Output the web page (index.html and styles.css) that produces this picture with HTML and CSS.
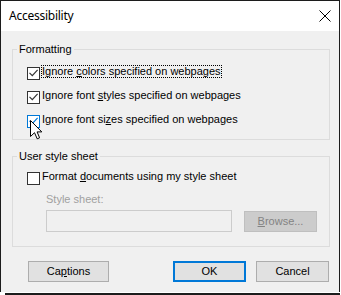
FILE: index.html
```html
<!DOCTYPE html>
<html>
<head>
<meta charset="utf-8">
<link rel="stylesheet" href="styles.css">
</head>
<body>
<div class="window">
  <div class="titlebar">
    <span class="title">Accessibility</span>
    <svg class="close" width="12" height="12" viewBox="0 0 12 12"><path d="M0.5 0.5 L11.5 11.5 M11.5 0.5 L0.5 11.5" stroke="#000" stroke-width="1" fill="none"/></svg>
  </div>
  <div class="content">
    <div class="group g1">
      <div class="group-title">Formatting</div>
      <div class="row">
        <span class="cb"><svg width="11" height="11" viewBox="0 0 11 11"><path d="M1.5 4.8 L4.3 7.6 L9.6 1.8" stroke="#333" stroke-width="1.2" fill="none"/></svg></span>
        <span class="label focus">Ignore <u>c</u>olors specified on webpages</span>
      </div>
      <div class="row">
        <span class="cb"><svg width="11" height="11" viewBox="0 0 11 11"><path d="M1.5 4.8 L4.3 7.6 L9.6 1.8" stroke="#333" stroke-width="1.2" fill="none"/></svg></span>
        <span class="label">Ignore font <u>s</u>tyles specified on webpages</span>
      </div>
      <div class="row">
        <span class="cb hover"><svg width="11" height="11" viewBox="0 0 11 11"><path d="M1.5 4.8 L4.3 7.6 L9.6 1.8" stroke="#0078d7" stroke-width="1.2" fill="none"/></svg></span>
        <span class="label">Ignore font si<u>z</u>es specified on webpages</span>
      </div>
    </div>
    <div class="group g2">
      <div class="group-title">User style sheet</div>
      <div class="row">
        <span class="cb"></span>
        <span class="label">Format <u>d</u>ocuments using my style sheet</span>
      </div>
      <div class="field-label">Style sheet:</div>
      <div class="field-row">
        <div class="input"></div>
        <div class="btn disabled"><u>B</u>rowse...</div>
      </div>
    </div>
    <div class="buttons">
      <div class="btn captions">Ca<u>p</u>tions</div>
      <div class="btn ok">OK</div>
      <div class="btn cancel">Cancel</div>
    </div>
  </div>
</div>
<div class="shadow"></div>
<svg class="cursor" width="13" height="20" viewBox="0 0 13 20"><path d="M0.5 0.5 L0.5 16.5 L4.5 12.7 L7.2 18.8 L9.6 17.8 L7.1 11.9 L11.8 11.9 Z" fill="#fff" stroke="#000" stroke-width="1" stroke-linejoin="miter"/></svg>
</body>
</html>
```
FILE: styles.css
```css
html, body {
  margin: 0;
  padding: 0;
  background: #ffffff;
}
body {
  font-family: "Liberation Sans", Arial, sans-serif;
  font-size: 11px;
  line-height: 13px;
  color: #000;
  position: relative;
}
.window {
  width: 340px;
  height: 292px;
  box-sizing: border-box;
  border: 1px solid #1c1c1c;
  border-bottom: 0;
  display: flex;
  flex-direction: column;
}
.titlebar {
  height: 30px;
  flex: none;
  box-sizing: border-box;
  background: #fff;
  display: flex;
  align-items: flex-start;
  padding: 7px 8px 0 8px;
}
.title {
  font-family: "Noto Sans", "Open Sans", sans-serif;
  font-size: 12px;
  line-height: 16px;
  letter-spacing: -0.25px;
}
.close {
  margin-left: auto;
  margin-top: 2px;
}
.content {
  flex: 1;
  background: #f0f0f0;
  padding: 0 9px 0 11px;
}
.group {
  border: 1px solid #dcdcdc;
  padding: 0 0 11px 14px;
}
.g1 {
  margin-top: 18px;
}
.g2 {
  margin-top: 16px;
  padding-bottom: 14px;
}
.group-title {
  width: fit-content;
  margin: -7px 0 0 -10px;
  padding: 0 2px;
  background: #f0f0f0;
}
.row {
  display: flex;
  align-items: flex-start;
  height: 15px;
  margin-top: 9px;
}
.g2 .row {
  margin-top: 7px;
}
.cb {
  flex: none;
  width: 13px;
  height: 13px;
  box-sizing: border-box;
  border: 1px solid #333;
  background: #fff;
  margin-top: 2px;
  margin-right: 1px;
}
.cb svg {
  display: block;
}
.cb.hover {
  border-color: #0078d7;
}
.label {
  padding: 0 1px;
}
.focus {
  outline: 1px dotted #000;
  outline-offset: -1px;
}
u {
  text-decoration: underline;
  text-underline-offset: 1px;
}
.field-label {
  margin-top: 8px;
  padding-left: 19px;
  color: #a0a0a0;
}
.field-row {
  display: flex;
  align-items: flex-start;
  margin-top: 4px;
  padding-left: 19px;
}
.input {
  width: 186px;
  height: 22px;
  box-sizing: border-box;
  border: 1px solid #cccccc;
  background: #f0f0f0;
}
.btn {
  box-sizing: border-box;
  height: 21px;
  border: 1px solid #adadad;
  background: #e1e1e1;
  text-align: center;
  line-height: 19px;
}
.btn.disabled {
  width: 73px;
  margin-left: 12px;
  margin-top: 1px;
  background: #cccccc;
  border-color: #bfbfbf;
  color: #838383;
}
.buttons {
  display: flex;
  margin-top: 14px;
  padding-left: 16px;
  padding-right: 1px;
}
.captions {
  width: 81px;
}
.ok {
  width: 73px;
  margin-left: auto;
  border: 2px solid #0078d7;
  line-height: 17px;
}
.cancel {
  width: 73px;
  margin-left: 10px;
}
.shadow {
  width: 335px;
  height: 2px;
  margin: 1px 0 0 5px;
  background: #1c1c1c;
}
.cursor {
  position: absolute;
  left: 30px;
  top: 120px;
}
```
